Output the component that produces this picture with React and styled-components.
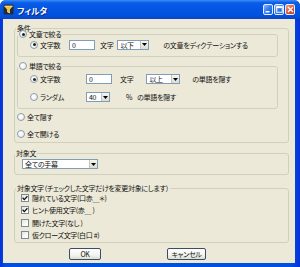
import React from "react";
import styled, { createGlobalStyle } from "styled-components";

const GlobalStyle = createGlobalStyle`
  html, body { margin: 0; padding: 0; background: #fff; }
  body {
    font-family: "Noto Sans CJK JP", "Noto Sans", sans-serif;
    font-size: 7px;
    font-feature-settings: "palt";
    letter-spacing: -0.3px;
    color: #111;
  }
  * { box-sizing: border-box; }
`;

const Window = styled.div`
  width: 300px;
  height: 267px;
  display: flex;
  flex-direction: column;
  background: linear-gradient(90deg, #0831d9 0%, #0050e0 2%, #0050e0 97%, #0831d9 100%);
  border-radius: 6px 6px 0 0;
  overflow: hidden;
`;

const TitleBar = styled.div`
  height: 19px;
  flex: none;
  display: flex;
  align-items: center;
  padding: 0 5px 0 3px;
  background: linear-gradient(180deg, #3d8ef9 0%, #0b5ee8 14%, #0456e3 45%, #0252de 80%, #0a43c6 100%);
`;

const TitleText = styled.span`
  flex: 1;
  margin-left: 3px;
  color: #fff;
  font-weight: bold;
  font-size: 8.5px;
  line-height: 10px;
  letter-spacing: 0;
  text-shadow: 1px 1px 0 #0b2a88;
`;

const CaptionButtons = styled.div`
  display: flex;
  gap: 1px;
  align-self: flex-start;
  margin-top: 4px;
`;

const CaptionButton = styled.div`
  width: 10px;
  height: 11px;
  border: 1px solid #e8eefc;
  border-radius: 2px;
  display: flex;
  align-items: center;
  justify-content: center;
  background: ${(p) =>
    p.$close
      ? "linear-gradient(135deg, #f4a68a 0%, #e2593a 50%, #c8381c 100%)"
      : "linear-gradient(135deg, #8ab8ff 0%, #2f78f2 50%, #1c5ad8 100%)"};
`;

const Client = styled.div`
  flex: 1;
  margin: 0 5px 4px 3px;
  padding: 5px 6px 0 11px;
  background: #ece9d8;
  display: flex;
  flex-direction: column;
`;

const Group = styled.fieldset`
  margin: ${(p) => p.$mt || 0}px 0 0 0;
  padding: 0 0 ${(p) => p.$pb || 0}px 0;
  border: 1px solid #d0d0bf;
  border-radius: 3px;
  min-width: 0;
`;

const Legend = styled.legend`
  display: flex;
  align-items: center;
  gap: 2px;
  height: 8px;
  line-height: 8px;
  padding: 0 1px;
  margin-left: ${(p) => p.$indent || 0}px;
`;

const Body = styled.div`
  display: flex;
  flex-direction: column;
  gap: ${(p) => p.$gap || 0}px;
  padding: ${(p) => p.$pt || 0}px ${(p) => p.$pr || 0}px 0 ${(p) => p.$pl || 0}px;
`;

const Row = styled.div`
  display: flex;
  align-items: center;
  height: ${(p) => p.$h || 10}px;
  margin-top: ${(p) => p.$mt || 0}px;
  padding-left: ${(p) => p.$pl || 0}px;
`;

const Choice = styled.div`
  display: flex;
  align-items: center;
  gap: 2px;
  width: ${(p) => (p.$w ? `${p.$w}px` : "auto")};
  flex: none;
  white-space: nowrap;
`;

const RadioCircle = styled.span`
  width: 8px;
  height: 8px;
  flex: none;
  border-radius: 50%;
  border: 1px solid #8a9cb4;
  background: radial-gradient(circle at 35% 35%, #ffffff 0%, #f2f2ee 60%, #d8d8d0 100%);
  display: flex;
  align-items: center;
  justify-content: center;
  &::after {
    content: "";
    width: 3px;
    height: 3px;
    border-radius: 50%;
    background: ${(p) => (p.$on ? "#1b2a1b" : "transparent")};
  }
`;

const CheckBox = styled.span`
  width: 8px;
  height: 8px;
  flex: none;
  border: 1px solid #7d8a96;
  background: linear-gradient(135deg, #e4e4dc 0%, #ffffff 80%);
  display: flex;
  align-items: center;
  justify-content: center;
`;

const Label = styled.span`
  margin-left: ${(p) => p.$ml || 0}px;
  white-space: nowrap;
  flex: none;
  line-height: 10px;
`;

const TextBox = styled.div`
  width: ${(p) => p.$w}px;
  height: 10px;
  flex: none;
  background: #fff;
  border: 1px solid #7f9db9;
  padding-left: 2px;
  line-height: 8px;
`;

const Combo = styled.div`
  width: ${(p) => p.$w}px;
  height: 10px;
  flex: none;
  margin-left: ${(p) => p.$ml || 0}px;
  display: flex;
  background: #fff;
  border: 1px solid #7f9db9;
  line-height: 8px;
`;

const ComboText = styled.span`
  flex: 1;
  padding-left: 2px;
  white-space: nowrap;
`;

const ComboButton = styled.span`
  width: 8px;
  flex: none;
  background: linear-gradient(180deg, #f6f6f2 0%, #dcdcd4 100%);
  border-left: 1px solid #c4c4bc;
  display: flex;
  align-items: center;
  justify-content: center;
`;

const ButtonBar = styled.div`
  display: flex;
  margin-top: 5px;
  padding-left: 55px;
`;

const PushButton = styled.div`
  width: ${(p) => p.$w}px;
  height: 12px;
  margin-left: ${(p) => p.$ml || 0}px;
  border: 1px solid #3c4c64;
  border-radius: 2px;
  background: linear-gradient(180deg, #ffffff 0%, #f4f4ee 60%, #dcdcd2 100%);
  display: flex;
  align-items: center;
  justify-content: center;
  line-height: 10px;
`;

function AppIcon() {
  return (
    <svg width="11" height="11" viewBox="0 0 11 11">
      <rect x="0.5" y="0.5" width="10" height="10" rx="1" fill="#2b2b2b" />
      <path d="M1.5 2 H9.5 L6.5 5.5 V9 L4.5 8 V5.5 Z" fill="#f2c230" stroke="#fff6c8" strokeWidth="0.6" />
    </svg>
  );
}

function Arrow() {
  return (
    <svg width="5" height="3" viewBox="0 0 5 3">
      <path d="M0 0 H5 L2.5 3 Z" fill="#000" />
    </svg>
  );
}

function Check() {
  return (
    <svg width="6" height="6" viewBox="0 0 6 6">
      <path d="M0.6 2.8 L2.3 4.6 L5.4 1.2" fill="none" stroke="#111" strokeWidth="1.3" />
    </svg>
  );
}

function Radio({ on, children, w }) {
  return (
    <Choice $w={w}>
      <RadioCircle $on={on} />
      {children && <Label>{children}</Label>}
    </Choice>
  );
}

function CheckItem({ on, children }) {
  return (
    <Choice>
      <CheckBox>{on && <Check />}</CheckBox>
      <Label $ml={1}>{children}</Label>
    </Choice>
  );
}

function Select({ w, ml, value }) {
  return (
    <Combo $w={w} $ml={ml}>
      <ComboText>{value}</ComboText>
      <ComboButton>
        <Arrow />
      </ComboButton>
    </Combo>
  );
}

export default function App() {
  return (
    <>
      <GlobalStyle />
      <Window>
        <TitleBar>
          <AppIcon />
          <TitleText>フィルタ</TitleText>
          <CaptionButtons>
            <CaptionButton>
              <svg width="6" height="6" viewBox="0 0 6 6">
                <rect x="0.5" y="4" width="4" height="1.5" fill="#fff" />
              </svg>
            </CaptionButton>
            <CaptionButton>
              <svg width="7" height="7" viewBox="0 0 7 7">
                <rect x="0.75" y="0.75" width="5.5" height="5.5" fill="none" stroke="#fff" strokeWidth="1" />
                <rect x="0.5" y="0.5" width="6" height="1.6" fill="#fff" />
              </svg>
            </CaptionButton>
            <CaptionButton $close>
              <svg width="7" height="7" viewBox="0 0 7 7">
                <path d="M1 1 L6 6 M6 1 L1 6" stroke="#fff" strokeWidth="1.4" />
              </svg>
            </CaptionButton>
          </CaptionButtons>
        </TitleBar>

        <Client>
          <Group $pb={3}>
            <Legend $indent={1}>条件</Legend>
            <Body $pl={2} $pr={10}>
              <Group $mt={-2} $pb={6}>
                <Legend>
                  <RadioCircle $on />
                  <span>文章で絞る</span>
                </Legend>
                <Row $h={11} $mt={1} $pl={12}>
                  <Radio on w={39}>文字数</Radio>
                  <TextBox $w={26}>0</TextBox>
                  <Label $ml={5}>文字</Label>
                  <Select w={32} ml={4} value="以下" />
                  <Label $ml={14}>の文章をディクテーションする</Label>
                </Row>
              </Group>

              <Group $mt={5} $pb={6}>
                <Legend>
                  <RadioCircle />
                  <span>単語で絞る</span>
                </Legend>
                <Body $pt={4} $gap={8} $pl={12}>
                  <Row>
                    <Radio on w={56}>文字数</Radio>
                    <TextBox $w={26}>0</TextBox>
                    <Label $ml={8}>文字</Label>
                    <Select w={34} ml={13} value="以上" />
                    <Label $ml={12}>の単語を隠す</Label>
                  </Row>
                  <Row>
                    <Radio w={56}>ランダム</Radio>
                    <Select w={24} value="40" />
                    <Label $ml={16}>%</Label>
                    <Label $ml={5}>の単語を隠す</Label>
                  </Row>
                </Body>
              </Group>

              <Row $mt={3}>
                <Radio>全て隠す</Radio>
              </Row>
              <Row $mt={7}>
                <Radio>全て開ける</Radio>
              </Row>
            </Body>
          </Group>

          <Group $mt={6} $pb={5}>
            <Legend $indent={0}>対象文</Legend>
            <Body $pt={2} $pl={7}>
              <Select w={76} value="全ての手幕" />
            </Body>
          </Group>

          <Group $mt={9} $pb={2}>
            <Legend $indent={1}>対象文字（チェックした文字だけを変更対象にします）</Legend>
            <Body $pt={1} $gap={2.3} $pl={6}>
              <Row>
                <CheckItem on>隠れている文字(口赤＿＊)</CheckItem>
              </Row>
              <Row>
                <CheckItem on>ヒント使用文字(赤＿ )</CheckItem>
              </Row>
              <Row>
                <CheckItem>開けた文字(なし )</CheckItem>
              </Row>
              <Row>
                <CheckItem>仮クローズ文字(白口 #)</CheckItem>
              </Row>
            </Body>
          </Group>

          <ButtonBar>
            <PushButton $w={32}>OK</PushButton>
            <PushButton $w={39} $ml={66}>キャンセル</PushButton>
          </ButtonBar>
        </Client>
      </Window>
    </>
  );
}
